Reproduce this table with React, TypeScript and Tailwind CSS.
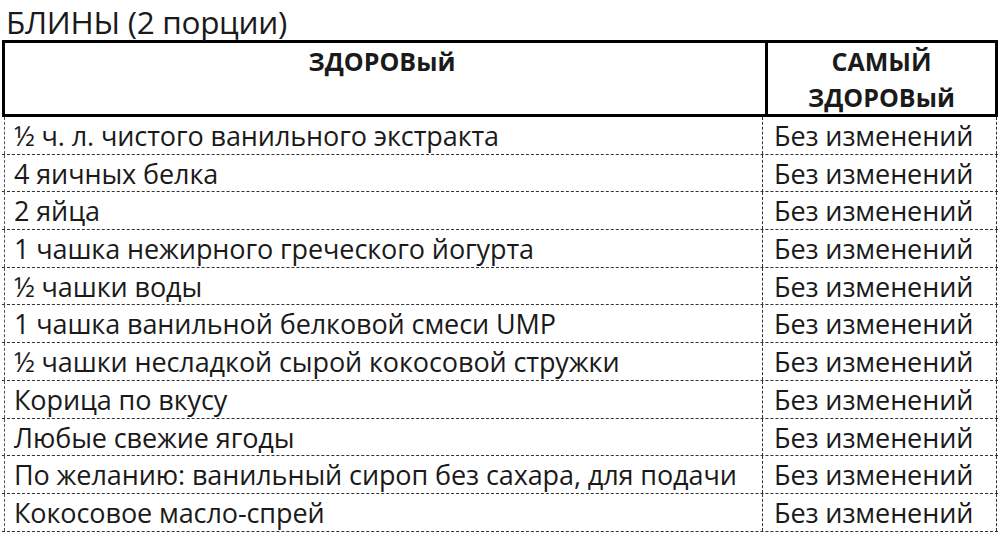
const rows = [
  "½ ч. л. чистого ванильного экстракта",
  "4 яичных белка",
  "2 яйца",
  "1 чашка нежирного греческого йогурта",
  "½ чашки воды",
  "1 чашка ванильной белковой смеси UMP",
  "½ чашки несладкой сырой кокосовой стружки",
  "Корица по вкусу",
  "Любые свежие ягоды",
  "По желанию: ванильный сироп без сахара, для подачи",
  "Кокосовое масло-спрей",
]

export default function App() {
  return (
    <div className="w-[1000px] h-[534px] bg-white text-[#1a1a1a] overflow-hidden font-['Open_Sans',sans-serif]">
      <div className="h-[40px] pt-[3px] pl-[6px] text-[31.5px] leading-[37px] tracking-[-0.3px] whitespace-nowrap">БЛИНЫ (2 порции)</div>

      <div className="mx-[2px] w-[996px]">
        {/* header */}
        <div className="grid grid-cols-[760px_1fr] border-[3px] border-black h-[77px] font-bold text-[25px] leading-[36px]">
          <div className="text-center pr-[6px]">ЗДОРОВый</div>
          <div className="border-l-[3px] border-black text-center">
            САМЫЙ
            <br />
            ЗДОРОВый
          </div>
        </div>

        {/* rows */}
        {rows.map((r, i) => (
          <div
            key={i}
            className="grid grid-cols-[760px_1fr] h-[37.7px] border-b border-dashed border-[#333] text-[27px] leading-[37px] tracking-[-0.1px]"
          >
            <div className="ml-[2px] border-l border-dashed border-[#555] pl-[9px] whitespace-nowrap">{r}</div>
            <div className="border-l border-dashed border-[#333] border-r mr-[1px] pl-[11px] whitespace-nowrap">Без изменений</div>
          </div>
        ))}
      </div>
    </div>
  )
}
